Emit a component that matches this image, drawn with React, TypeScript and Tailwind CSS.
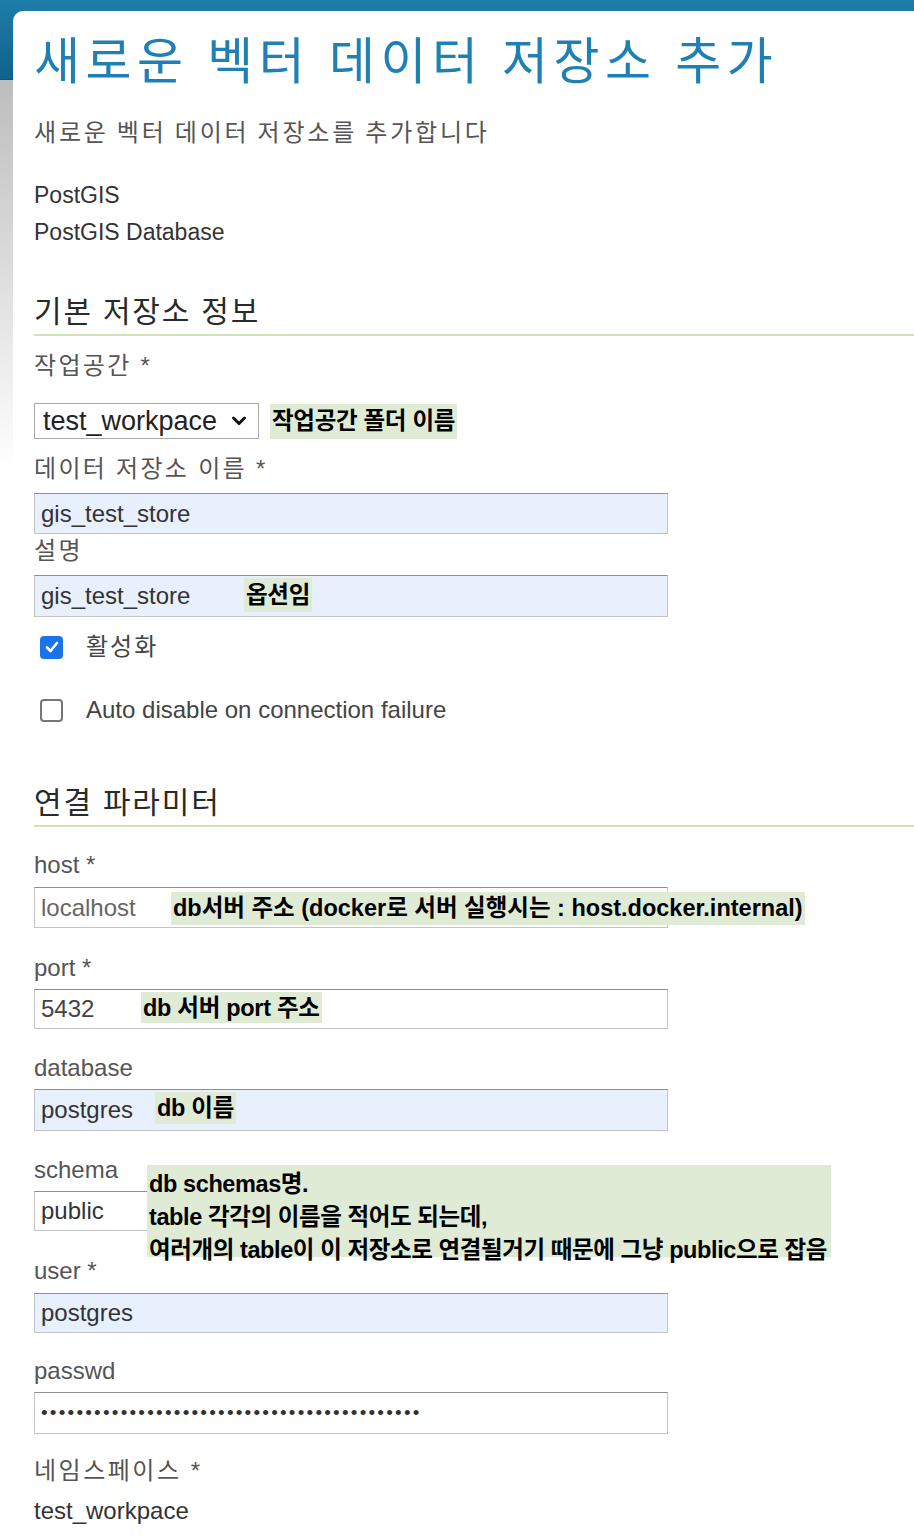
import type { ReactNode } from "react";

// 스크린샷 위에 덧붙인 초록 메모 상자
function Note({ children, className = "" }: { children: ReactNode; className?: string }) {
  return (
    <div className={"bg-[#e0ebd6] px-[2px] text-[23.5px] font-bold leading-[33px] text-black " + className}>
      {children}
    </div>
  );
}

function Label({ children, className = "" }: { children: ReactNode; className?: string }) {
  return <div className={"h-[32px] text-[24px] leading-[32px] text-[#555] " + className}>{children}</div>;
}

function Field({
  value,
  filled,
  className = "",
  textClass = "text-[#333]",
  children,
}: {
  value: string;
  filled?: boolean;
  className?: string;
  textClass?: string;
  children?: ReactNode;
}) {
  return (
    <div className={"relative w-[634px] " + className}>
      <div
        className={[
          "flex h-full items-center border border-[#c4c4c4] border-t-[#8e8e8e] pl-[6px] text-[24px]",
          filled ? "bg-[#e8f0fe]" : "bg-white",
          textClass,
        ].join(" ")}
      >
        {value}
      </div>
      {children}
    </div>
  );
}

function Checkbox({ checked }: { checked?: boolean }) {
  if (checked) {
    return (
      <span className="flex h-[23px] w-[23px] items-center justify-center rounded-[4px] bg-[#1a73e8]">
        <svg width="16" height="16" viewBox="0 0 16 16" fill="none">
          <path d="M3 8.5 L6.5 12 L13 4" stroke="white" strokeWidth="2.6" strokeLinecap="round" strokeLinejoin="round" />
        </svg>
      </span>
    );
  }
  return <span className="h-[23px] w-[23px] rounded-[4px] border-2 border-[#767676] bg-white" />;
}

export default function App() {
  return (
    <div className="min-h-screen bg-white font-['Liberation_Sans','Noto_Sans_CJK_KR',sans-serif]">
      {/* 상단 파란 띠 */}
      <div className="h-[80px] border-b border-[#0d577d] bg-gradient-to-b from-[#1f7ea9] to-[#10618b]" />

      <div className="-mt-[69px] flex">
        <div className="mt-[69px] h-[390px] w-[13px] shrink-0 bg-gradient-to-b from-[#bdbdbd] to-white" />

        <main className="flex-1 rounded-tl-[10px] bg-white pl-[21px] pt-[16px]">
          <h1 className="h-[60px] whitespace-nowrap font-['Noto_Sans_CJK_KR',sans-serif] text-[50px] leading-[60px] tracking-[5.5px] text-[#1f80b4] [word-spacing:2px]">
            새로운 벡터 데이터 저장소 추가
          </h1>
          <p className="mt-[28px] h-[32px] font-['Noto_Sans_CJK_KR',sans-serif] text-[24px] leading-[32px] tracking-[2.8px] text-[#555]">
            새로운 벡터 데이터 저장소를 추가합니다
          </p>

          <div className="mt-[30px] text-[23px] leading-[37px] text-[#333]">
            <div>PostGIS</div>
            <div>PostGIS Database</div>
          </div>

          {/* 기본 저장소 정보 */}
          <h2 className="mt-[41px] h-[40px] text-[30px] leading-[40px] tracking-[1.8px] text-[#2a2a2a]">기본 저장소 정보</h2>
          <div className="mt-[2px] h-[2px] bg-[#cfe4b4]" />

          <Label className="mt-[14px] tracking-[2.3px]">작업공간 *</Label>
          <div className="mt-[21px] flex items-center gap-[11px]">
            <div className="flex h-[36px] w-[225px] items-center justify-between border border-[#a9a9a9] pl-[8px] pr-[11px] text-[27px] text-[#222]">
              <span>test_workpace</span>
              <svg width="16" height="12" viewBox="0 0 16 12" fill="none">
                <path d="M2.5 3 L8 8.5 L13.5 3" stroke="#111" strokeWidth="3" strokeLinecap="round" strokeLinejoin="round" />
              </svg>
            </div>
            <Note className="h-[35px] leading-[35px] tracking-[-0.3px]">작업공간 폴더 이름</Note>
          </div>

          <Label className="mt-[14px] tracking-[2.3px]">데이터 저장소 이름 *</Label>
          <Field value="gis_test_store" filled className="mt-[8px] h-[41px]" />

          <Label className="mt-[1px] tracking-[2.3px]">설명</Label>
          <Field value="gis_test_store" filled className="mt-[8px] h-[42px]">
            <Note className="absolute left-[210px] top-[3px] h-[34px] leading-[34px] tracking-[-0.3px]">옵션임</Note>
          </Field>

          <label className="mt-[14px] flex h-[32px] items-center gap-[23px] pl-[6px] text-[24px] tracking-[2px] text-[#444]">
            <Checkbox checked />
            <span>활성화</span>
          </label>
          <label className="mt-[31px] flex h-[32px] items-center gap-[23px] pl-[6px] text-[24px] text-[#444]">
            <Checkbox />
            <span>Auto disable on connection failure</span>
          </label>

          {/* 연결 파라미터 */}
          <h2 className="mt-[57px] h-[40px] text-[30px] leading-[40px] tracking-[1.8px] text-[#2a2a2a]">연결 파라미터</h2>
          <div className="mt-[2px] h-[2px] bg-[#cfe4b4]" />

          <Label className="mt-[22px]">host *</Label>
          <Field value="localhost" className="mt-[6px] h-[41px]" textClass="text-[#666]">
            <Note className="absolute left-[137px] top-[5px] h-[33px] whitespace-nowrap tracking-[0px]">
              db서버 주소 (docker로 서버 실행시는 : host.docker.internal)
            </Note>
          </Field>

          <Label className="mt-[24px]">port *</Label>
          <Field value="5432" className="mt-[5px] h-[40px]" textClass="text-[#444]">
            <Note className="absolute left-[107px] top-[3px] h-[31px] leading-[31px] tracking-[-0.3px]">db 서버 port 주소</Note>
          </Field>

          <Label className="mt-[23px]">database</Label>
          <Field value="postgres" filled className="mt-[5px] h-[42px]">
            <Note className="absolute left-[121px] top-[3px] h-[32px] leading-[32px] tracking-[-0.3px]">db 이름</Note>
          </Field>

          <Label className="mt-[23px]">schema</Label>
          <Field value="public" className="mt-[5px] h-[40px]">
            <Note className="absolute left-[113px] top-[-26px] h-[92px] w-[684px] pt-[3px] leading-[28px] tracking-[-0.4px]">
              <div>db schemas명.</div>
              <div>table 각각의 이름을 적어도 되는데,</div>
              <div className="whitespace-nowrap">여러개의 table이 이 저장소로 연결될거기 때문에 그냥 public으로 잡음</div>
            </Note>
          </Field>

          <Label className="mt-[24px]">user *</Label>
          <Field value="postgres" filled className="mt-[6px] h-[40px]" />

          <Label className="mt-[22px]">passwd</Label>
          <div className="mt-[5px] flex h-[42px] w-[634px] items-center border border-[#c4c4c4] border-t-[#8e8e8e] bg-white pl-[6px] text-[19px] tracking-[2.2px] text-[#333]">
            {"•".repeat(43)}
          </div>

          <Label className="mt-[21px] tracking-[2.5px]">네임스페이스 *</Label>
          <div className="mt-[8px] h-[32px] text-[24px] leading-[32px] text-[#333]">test_workpace</div>
        </main>
      </div>
    </div>
  );
}
